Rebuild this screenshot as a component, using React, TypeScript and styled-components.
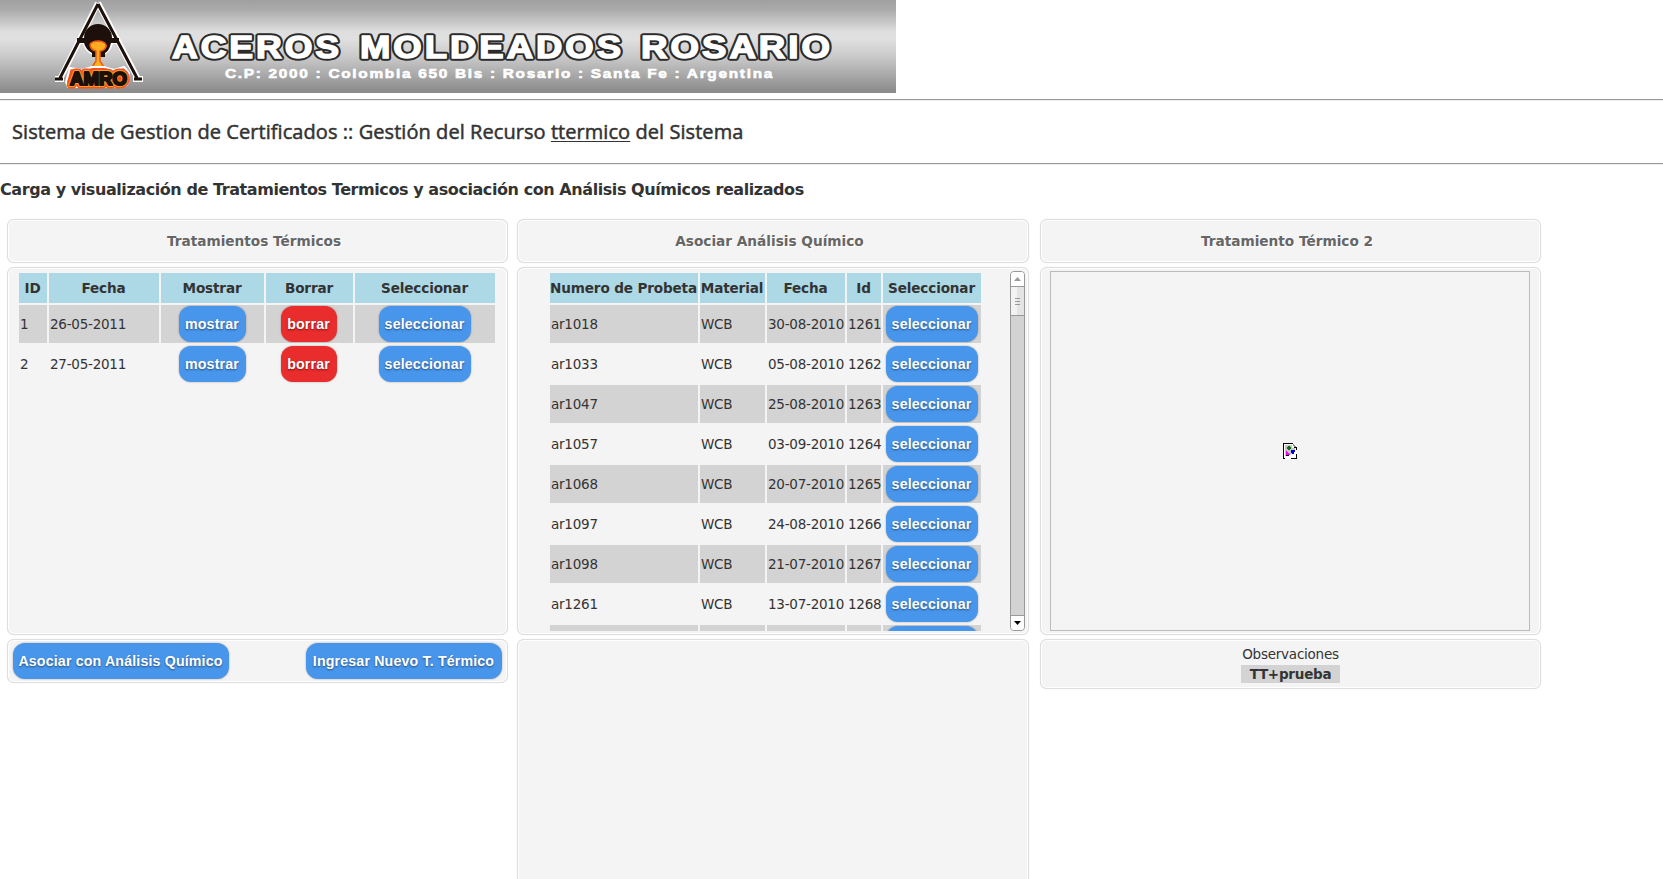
import React from "react";
import styled, { createGlobalStyle } from "styled-components";

const Global = createGlobalStyle`
  * { box-sizing: border-box; }
  html, body, #root { height: 100%; }
  body {
    margin: 0; background: #fff; color: #333; overflow: hidden;
    font: 13.5px/20px "DejaVu Sans", sans-serif; letter-spacing: -0.24px;
  }
`;

const Page = styled.div`height: 100%; overflow: hidden;`;
const Banner = styled.header`
  width: 896px; height: 93px; margin-bottom: 6px;
  background: linear-gradient(#a0a0a0 0, #aaaaaa 10%, #dedede 34%, #e0e0e0 42%, #c8c8c8 62%, #8f8f90 96%, #8b8b8b 100%);
  svg { display: block; letter-spacing: 0; }
`;
const Rule = styled.hr`margin: 0; border: 0; height: 2px; background: linear-gradient(#999 50%, #ececec 50%);`;
const Title = styled.h1`
  display: flex; align-items: center; height: 62px; margin: 0; padding-left: 12px;
  font: 500 20px/26px "Open Sans", sans-serif; white-space: pre; letter-spacing: 0.06px;
  -webkit-text-stroke: 0.5px #333;
  u { text-decoration-thickness: 1px; text-underline-offset: 2px; }
`;
const Subtitle = styled.h2`
  height: 20px; margin: 15px 0 19px; font: bold 16px/20px "DejaVu Sans", sans-serif; letter-spacing: -0.43px; white-space: nowrap;
`;
const Columns = styled.main`display: flex; align-items: flex-start; padding-left: 7px;`;
const Column = styled.section<{ $w: number; $gap?: number }>`
  display: flex; flex-direction: column; gap: 4px; flex: none;
  width: ${p => p.$w}px; margin-right: ${p => p.$gap ?? 0}px;
`;
const Panel = styled.div<{ $h: number }>`
  height: ${p => p.$h}px; border: 1px solid #dedede; border-radius: 7px; background: #f4f4f4;
  box-shadow: inset 0 0 0 1px #fff, 0 0 1px #ddd; overflow: hidden;
`;
const Heading = styled(Panel)`
  display: flex; align-items: center; justify-content: center; padding-right: 7px;
  font-size: 13.7px; font-weight: bold; letter-spacing: -0.02px; color: #666; text-shadow: 1px 1px 0 #fff;
`;
const Actions = styled(Panel)`display: flex; align-items: center; justify-content: space-between; padding: 0 5px;`;
const Notes = styled(Panel)`display: flex; flex-direction: column; align-items: center; padding-top: 4px;`;
const Note = styled.strong`width: 99px; height: 18px; margin-top: 1px; line-height: 18px; background: #d3d3d3; text-align: center;`;

const Grid = styled.div<{ $cols: string; $left: number }>`
  display: grid; grid-template-columns: ${p => p.$cols}; grid-template-rows: 30px; grid-auto-rows: 38px;
  gap: 2px; padding: 5px 0 0 ${p => p.$left}px; flex: none;
`;
const Head = styled.div`
  background: #add8e6; font-weight: bold; font-size: 13.6px; letter-spacing: -0.15px; padding-right: 1px;
  display: flex; align-items: center; justify-content: center; white-space: nowrap;
`;
const Cell = styled.div<{ $shade: boolean; $center?: boolean }>`
  background: ${p => (p.$shade ? "#d3d3d3" : "transparent")};
  display: flex; align-items: center; justify-content: ${p => (p.$center ? "center" : "flex-start")};
  padding: 0 1px; white-space: nowrap;
`;
const Button = styled.button<{ $w: number; $danger?: boolean }>`
  width: ${p => p.$w}px; height: 36px; flex: none; padding: 0 1px 0 0; border: 0; border-radius: 12px;
  margin: ${p => (p.$danger ? "0 1px 0 0" : "0")};
  background: ${p => (p.$danger ? "#e92c2c" : "#4896ec")}; color: #fff;
  font: bold 14.2px/37px "Liberation Sans", sans-serif; letter-spacing: 0.16px; white-space: nowrap;
  text-shadow: 0 1px 2px rgba(0,0,0,.5); box-shadow: 0 0 2px rgba(0,0,0,.35);
`;
const ScrollPanel = styled(Panel)`display: flex; justify-content: space-between; padding-bottom: 3px;`;
const Clip = styled.div`height: 363px; overflow: hidden;`;
const Scrollbar = styled.div`
  width: 15px; height: 360px; margin: 3px 3px 0 0; border: 1px solid #999; border-radius: 4px; background: #d3d3d3;
  display: flex; flex-direction: column; overflow: hidden;
`;
const Arrow = styled.div`
  height: 14px; background: #fff; display: flex; align-items: center; justify-content: center;
  svg { display: block; }
`;
const Thumb = styled.div`
  height: 30px; border: solid #999; border-width: 1px 0; background: linear-gradient(90deg, #f3f3f3 50%, #e4e4e4 50%);
  display: flex; align-items: center; justify-content: center;
`;
const Spacer = styled.div`flex: 1; border-bottom: 1px solid #999;`;
const Frame = styled.div`
  width: 480px; height: 360px; margin: 3px 0 0 9px; border: 1px solid #bbb;
  display: flex; align-items: center; justify-content: center;
`;

const probetas = [
  ["ar1018", "30-08-2010", "1261"], ["ar1033", "05-08-2010", "1262"], ["ar1047", "25-08-2010", "1263"],
  ["ar1057", "03-09-2010", "1264"], ["ar1068", "20-07-2010", "1265"], ["ar1097", "24-08-2010", "1266"],
  ["ar1098", "21-07-2010", "1267"], ["ar1261", "13-07-2010", "1268"], ["", "", ""],
];

const bannerWords = [
  { word: "ACEROS", x: 172, width: 170 },
  { word: "MOLDEADOS", x: 360, width: 264 },
  { word: "ROSARIO", x: 641, width: 192 },
];

const BannerArt = () => (
  <svg width="896" height="93" viewBox="0 0 896 93">
    <path d="M98 3 L60 79 M98 3 L138 79 M55 79H64 M133 79H143 M78 41H118" fill="none" stroke="#fff" strokeWidth="6" />
    <circle cx="98" cy="41" r="15" fill="#fff" />
    <path d="M98 4 L60 78 M98 4 L137 78 M55 79H63 M134 79H142" fill="none" stroke="#1d100a" strokeWidth="3" />
    <path d="M77 38H84A14 14 0 0 1 112 38H119V43H111Q109 51 105 53V57H92V53Q86 50 84 43H77Z" fill="#1d100a" />
    <path d="M90 45Q91 41 99 41Q107 42 106 47Q104 51 100 51L100 61L106 70H90L96 61V51Q91 50 90 45Z" fill="#ffae22" stroke="#f05a10" strokeWidth="1.5" />
    <path d="M70 68L82 70L92 67L104 67L114 70L124 67L129 73L127 85L118 87L68 87L66 82Z" fill="#f4511b" stroke="#fff" strokeWidth="2" strokeLinejoin="round" />
    <g fontFamily="Liberation Sans, sans-serif" fontWeight="bold" fontSize="18.500" strokeLinejoin="round">
      <text x="70" y="85" textLength="57" lengthAdjust="spacingAndGlyphs" fill="#f4511b" stroke="#f4511b" strokeWidth="7">AMRO</text>
      <text x="70" y="85" textLength="57" lengthAdjust="spacingAndGlyphs" fill="#fa9b26" stroke="#fa9b26" strokeWidth="4">AMRO</text>
      <text x="70" y="85" textLength="57" lengthAdjust="spacingAndGlyphs" fill="#1d100a" stroke="#1d100a" strokeWidth="2.2">AMRO</text>
    </g>
    <g fontFamily="Liberation Sans, sans-serif" fontWeight="bold" fontSize="31.500" letterSpacing="2.6">
      {bannerWords.map(({ word, x, width }) => (
        <React.Fragment key={word}>
          <text x={x} y="58" textLength={width} lengthAdjust="spacingAndGlyphs" stroke="#2b2b2b" strokeWidth="5.4" strokeLinejoin="round">{word}</text>
          <text x={x} y="58" textLength={width} lengthAdjust="spacingAndGlyphs" fill="#fff" stroke="#fff" strokeWidth="1.5">{word}</text>
        </React.Fragment>
      ))}
    </g>
    <text x="225" y="78" textLength="549" lengthAdjust="spacingAndGlyphs" fontFamily="Liberation Sans, sans-serif" fontWeight="bold" fontSize="13.500" letterSpacing="1.5" fill="#fff" stroke="#fff" strokeWidth=".6">C.P: 2000 : Colombia 650 Bis : Rosario : Santa Fe : Argentina</text>
  </svg>
);

const BrokenImage = () => (
  <svg width="14" height="16" viewBox="0 0 14 16" shapeRendering="crispEdges">
    <path d="M0 0H10L14 4V16H0Z" fill="#fff" />
    <path d="M2 2H9V5H12V9L5 13H2Z" fill="#c4c4c4" />
    <path d="M0 0H10V1H1V15H2V16H0ZM13 4H14V7H13ZM11 4H13V5H11ZM13 11H14V16H8V15H13Z" fill="#000" />
    <path d="M10 1H11V2H12V3H13V4H11V3H10Z" fill="#888" />
    <path d="M5 3H7V4H8V6H7V7H5V6H4V4H5Z" fill="#107010" />
    <path d="M3 8H4V9H5V10H6V11H7V12H3Z" fill="#f0f" />
    <path d="M3 12H6V13H3Z" fill="#000" />
    <path d="M8 7H12V9H11V11H9V10H8Z" fill="#0000e0" />
  </svg>
);

export default function App() {
  return (
    <>
      <Global />
      <Page>
        <Banner><BannerArt /></Banner>
        <Rule />
        <Title>Sistema de Gestion de Certificados :: Gestión del Recurso <u>ttermico</u> del Sistema</Title>
        <Rule />
        <Subtitle>Carga y visualización de Tratamientos Termicos y asociación con Análisis Químicos realizados</Subtitle>
        <Columns>
          <Column $w={501} $gap={9}>
            <Heading $h={44}>Tratamientos Térmicos</Heading>
            <Panel $h={368}>
              <Grid $cols="28px 110px 103px 87px 140px" $left={11}>
                {["ID", "Fecha", "Mostrar", "Borrar", "Seleccionar"].map(h => <Head key={h}>{h}</Head>)}
                {[["1", "26-05-2011"], ["2", "27-05-2011"]].map(([id, date], i) => (
                  <React.Fragment key={id}>
                    <Cell $shade={!i}>{id}</Cell>
                    <Cell $shade={!i}>{date}</Cell>
                    <Cell $shade={!i} $center><Button $w={67}>mostrar</Button></Cell>
                    <Cell $shade={!i} $center><Button $w={56} $danger>borrar</Button></Cell>
                    <Cell $shade={!i} $center><Button $w={92}>seleccionar</Button></Cell>
                  </React.Fragment>
                ))}
              </Grid>
            </Panel>
            <Actions $h={44}>
              <Button $w={216}>Asociar con Análisis Químico</Button>
              <Button $w={196}>Ingresar Nuevo T. Térmico</Button>
            </Actions>
          </Column>
          <Column $w={512} $gap={11}>
            <Heading $h={44}>Asociar Análisis Químico</Heading>
            <ScrollPanel $h={368}>
              <Clip>
                <Grid $cols="148px 65px 78px 34px 98px" $left={32}>
                  {["Numero de Probeta", "Material", "Fecha", "Id", "Seleccionar"].map(h => <Head key={h}>{h}</Head>)}
                  {probetas.map(([name, date, id], i) => (
                    <React.Fragment key={i}>
                      <Cell $shade={i % 2 === 0}>{name}</Cell>
                      <Cell $shade={i % 2 === 0}>{name && "WCB"}</Cell>
                      <Cell $shade={i % 2 === 0}>{date}</Cell>
                      <Cell $shade={i % 2 === 0}>{id}</Cell>
                      <Cell $shade={i % 2 === 0} $center><Button $w={92}>{name && "seleccionar"}</Button></Cell>
                    </React.Fragment>
                  ))}
                </Grid>
              </Clip>
              <Scrollbar>
                <Arrow><svg width="7" height="4"><path d="M3.500 0L7 4H0Z" fill="#999" /></svg></Arrow>
                <Thumb><svg width="5" height="7"><path d="M0 .5H5M0 3.500H5M0 6.500H5" stroke="#999" /></svg></Thumb>
                <Spacer />
                <Arrow><svg width="7" height="4"><path d="M0 0H7L3.500 4Z" fill="#000" /></svg></Arrow>
              </Scrollbar>
            </ScrollPanel>
            <Panel $h={300} />
          </Column>
          <Column $w={501}>
            <Heading $h={44}>Tratamiento Térmico 2</Heading>
            <Panel $h={368}><Frame><BrokenImage /></Frame></Panel>
            <Notes $h={50}>
              <span>Observaciones</span>
              <Note>TT+prueba</Note>
            </Notes>
          </Column>
        </Columns>
      </Page>
    </>
  );
}
